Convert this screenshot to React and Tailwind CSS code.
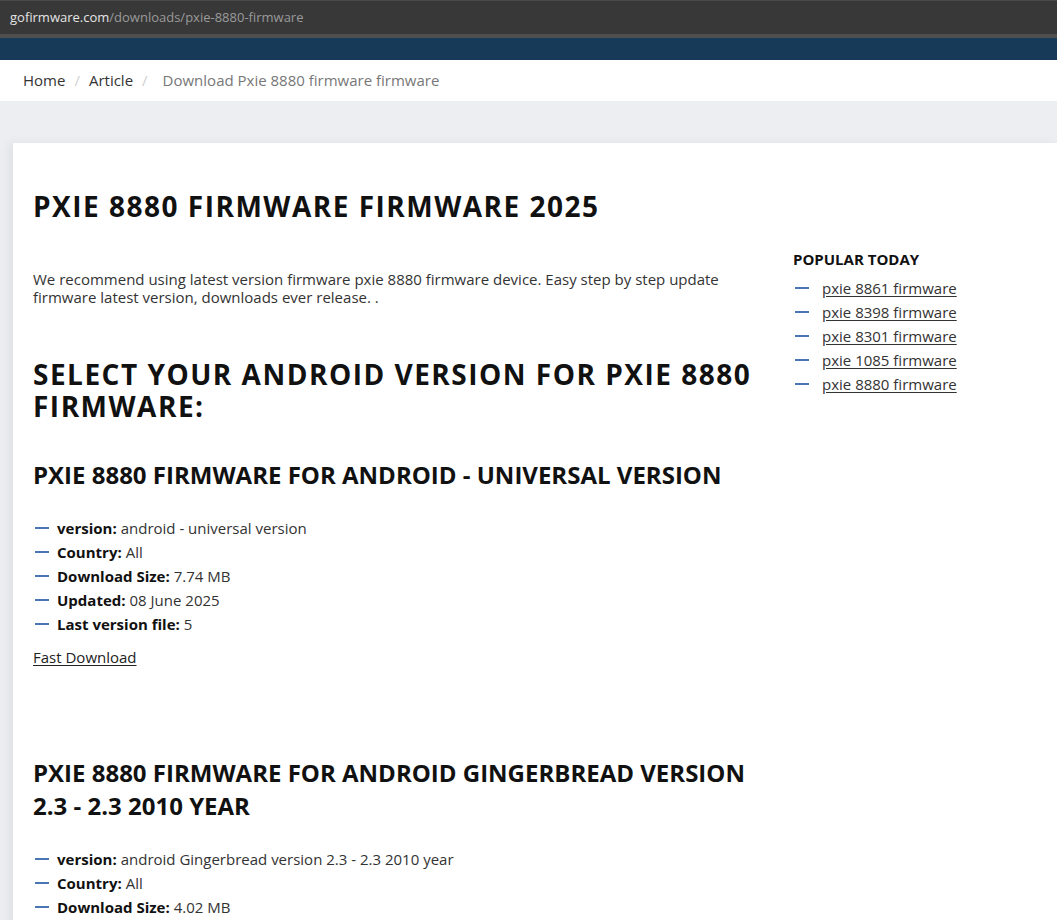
import React from 'react';

const FONT = { fontFamily: '"Open Sans", "Noto Sans", sans-serif' };

const popular = ['pxie 8861 firmware', 'pxie 8398 firmware', 'pxie 8301 firmware', 'pxie 1085 firmware', 'pxie 8880 firmware'];

const versions = [
  {
    title: 'PXIE 8880 FIRMWARE FOR ANDROID - UNIVERSAL VERSION',
    rows: [
      ['version:', 'android - universal version'],
      ['Country:', 'All'],
      ['Download Size:', '7.74 MB'],
      ['Updated:', '08 June 2025'],
      ['Last version file:', '5'],
    ],
  },
  {
    title: 'PXIE 8880 FIRMWARE FOR ANDROID GINGERBREAD VERSION 2.3 - 2.3 2010 YEAR',
    rows: [
      ['version:', 'android Gingerbread version 2.3 - 2.3 2010 year'],
      ['Country:', 'All'],
      ['Download Size:', '4.02 MB'],
      ['Updated:', '08 June 2025'],
      ['Last version file:', '5'],
    ],
  },
];

function Dash() {
  return <span className="inline-block w-[14px] h-[2px] bg-[#4a76b5] mr-[8px] ml-[2px] align-middle" />;
}

function VersionBlock({ v }) {
  return (
    <section className="mb-[87px]">
      <h3 className="text-[24px] leading-[33px] font-bold text-[#111]">{v.title}</h3>
      <ul className="mt-[25px]">
        {v.rows.map(([k, val]) => (
          <li key={k} className="h-[24px] flex items-center text-[15px] text-[#333]">
            <Dash />
            <b className="font-bold text-[#111] mr-[4px]">{k}</b>
            <span>{val}</span>
          </li>
        ))}
      </ul>
      <a href="#" className="inline-block mt-[10px] text-[15px] text-[#222] underline underline-offset-2">Fast Download</a>
    </section>
  );
}

export default function App() {
  return (
    <div style={FONT} className="min-h-[920px] bg-[#edeef2] overflow-hidden">
      {/* адресная строка */}
      <div className="h-[34px] bg-[#383838] border-t border-[#4a4a4a] flex items-center px-[10px] text-[13px]">
        <span className="text-[#e4e4e4]">gofirmware.com</span>
        <span className="text-[#9a9a9a]">/downloads/pxie-8880-firmware</span>
      </div>
      <div className="h-[4px] bg-[#4f4f4f]" />
      <div className="h-[22px] bg-[#173a59]" />

      <nav className="h-[41px] bg-white flex items-center px-[23px] text-[15px]">
        <a href="#" className="text-[#333]">Home</a>
        <span className="text-[#d0d0d0] ml-[9px] mr-[9px]">/</span>
        <a href="#" className="text-[#333]">Article</a>
        <span className="text-[#d0d0d0] ml-[9px] mr-[15px]">/</span>
        <span className="text-[#777]">Download Pxie 8880 firmware firmware</span>
      </nav>

      <main className="ml-[13px] mt-[42px] bg-white shadow-[-4px_0_10px_rgba(0,0,0,0.06)] pl-[20px] pt-[44px] flex gap-[20px]">
        <div className="w-[740px] shrink-0">
          <h1 className="text-[28px] leading-[38px] font-bold tracking-[1.5px] text-[#111]">PXIE 8880 FIRMWARE FIRMWARE 2025</h1>
          <p className="mt-[45px] text-[15px] leading-[18px] text-[#333] pr-[30px]">
            We recommend using latest version firmware pxie 8880 firmware device. Easy step by step update firmware latest version, downloads ever release. .
          </p>
          <h2 className="mt-[52px] text-[28px] leading-[32px] font-bold tracking-[1.5px] text-[#111]">
            SELECT YOUR ANDROID VERSION FOR PXIE 8880 FIRMWARE:
          </h2>
          <div className="mt-[36px]">
            {versions.map(v => (
              <VersionBlock key={v.title} v={v} />
            ))}
          </div>
        </div>

        <aside className="pt-[62px]">
          <h4 className="text-[15px] leading-[20px] font-bold text-[#111]">POPULAR TODAY</h4>
          <ul className="mt-[7px]">
            {popular.map(p => (
              <li key={p} className="h-[24px] flex items-center text-[15px]">
                <Dash />
                <a href="#" className="ml-[5px] text-[#333] underline underline-offset-2">{p}</a>
              </li>
            ))}
          </ul>
        </aside>
      </main>
    </div>
  );
}
